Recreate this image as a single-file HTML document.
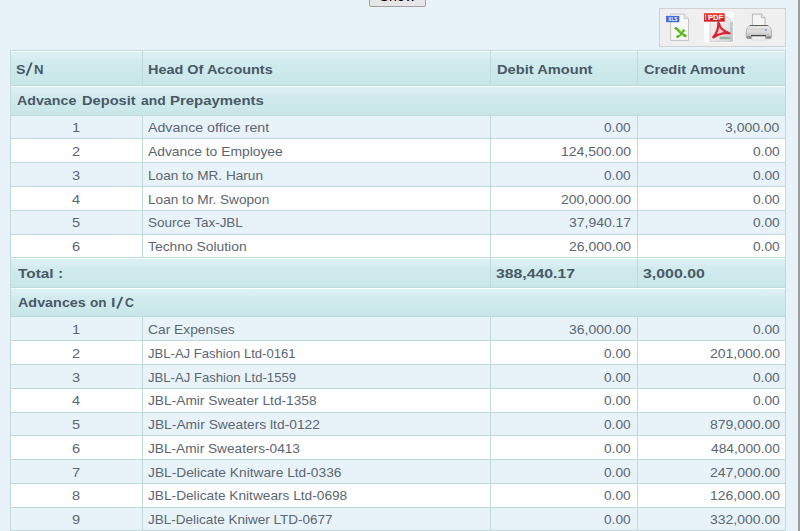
<!DOCTYPE html>
<html><head><meta charset="utf-8"><title>Report</title>
<style>
html,body{margin:0;padding:0}
body{width:800px;height:531px;overflow:hidden;position:relative;background:#e8f3f9;font-family:"Liberation Sans",sans-serif;font-size:13.5px;line-height:20px;color:#5b6672}
#boxes div{position:absolute}
span.n,span.b{position:absolute;white-space:nowrap;transform-origin:0 0;height:20px}
span.b{font-weight:bold;color:#4a5866}
#edge{position:absolute;left:798px;top:0;width:2px;height:531px;background:#9c9f9f}
#btn{position:absolute;left:369px;top:-15px;width:55px;height:20px;border:1px solid #a0a0a0;background:#e6e6e6;border-radius:2px}
#btn i{position:absolute;left:0;right:0;top:0px;text-align:center;font-style:normal;color:#000;font-size:14px;line-height:20px;letter-spacing:0.3px}
#tools{position:absolute;left:659px;top:8px;width:125px;height:37px;border:1px solid #d2d2d2;background:#efefef}
#icons{position:absolute;left:0;top:0}
</style></head><body>
<div id="btn"><i>Show</i></div>
<div id="tools"><svg id="icons" width="125" height="38" viewBox="660 9 125 38">
<defs>
<linearGradient id="pg" x1="0" y1="0" x2="1" y2="1"><stop offset="0" stop-color="#f8ecf1"/><stop offset="0.5" stop-color="#ece6ea"/><stop offset="1" stop-color="#cbd9d5"/></linearGradient>
<linearGradient id="rd" x1="0" y1="0" x2="0" y2="1"><stop offset="0" stop-color="#f2504a"/><stop offset="1" stop-color="#c5141a"/></linearGradient>
<linearGradient id="pb" x1="0" y1="0" x2="0" y2="1"><stop offset="0" stop-color="#f4f4f4"/><stop offset="0.55" stop-color="#d6d6d6"/><stop offset="1" stop-color="#b0b0b0"/></linearGradient>
</defs>
<!-- XLS -->
<path d="M670.6 14.1 H684.2 L688.5 18.4 V40.4 H670.6 Z" fill="#f7f7f7" stroke="#c4c4c4" stroke-width="1"/>
<path d="M684.2 14.1 V18.4 H688.5" fill="#e6e6e6" stroke="#c4c4c4" stroke-width="0.8"/>
<rect x="666.1" y="15.9" width="13.2" height="6.3" fill="#4767dd"/>
<text x="672.8" y="20.9" font-family="Liberation Sans, sans-serif" font-size="4.6" font-weight="bold" fill="#fff" text-anchor="middle">XLS</text>
<path d="M675.6 28.3 C678.8 29.3 679.6 33.6 685.2 35.6" fill="none" stroke="#5cbb22" stroke-width="2.6" stroke-linecap="round"/>
<path d="M683.6 30.4 C682.6 33 680.6 35.4 677.6 36.8" fill="none" stroke="#5cbb22" stroke-width="1.7" stroke-linecap="round"/>
<circle cx="683.6" cy="30.6" r="1.3" fill="#5cbb22"/>
<circle cx="677.6" cy="36.7" r="1.4" fill="#5cbb22"/>
<circle cx="685" cy="35.7" r="1.5" fill="#5cbb22"/>
<!-- PDF -->
<rect x="704" y="12" width="30" height="30.5" fill="#fff"/>
<path d="M710 17 H728 L732.5 21.5 V41.5 H710 Z" fill="url(#pg)" stroke="#c2c2ca" stroke-width="0.7"/>
<path d="M730 22 H732.2 V41 H730 Z" fill="#9fb4b4" opacity="0.5"/>
<path d="M718.4 22.6 C720 27.4 722 30.6 729.4 33.4 C724 32.4 719.4 33.4 713.4 37.4 C716.6 33 718.8 28.4 718.4 22.6 Z" fill="#f3c9cf" stroke="#d9252f" stroke-width="2.3" stroke-linejoin="round"/>
<circle cx="714.4" cy="36.3" r="1.7" fill="#d9252f"/>
<rect x="719.6" y="36.6" width="10.4" height="2.6" fill="#6e927c" opacity="0.6"/>
<rect x="704" y="13" width="20.7" height="8.6" fill="url(#rd)"/>
<text x="715.6" y="20.2" font-family="Liberation Sans, sans-serif" font-size="7.6" font-weight="bold" fill="#fff" text-anchor="middle">PDF</text>
<rect x="705" y="14.5" width="1.1" height="5.5" fill="#f9b8b8"/>
<!-- Printer -->
<path d="M752.4 25.5 V14.1 H761.4 L765 17.7 V25.5 Z" fill="#f4f4f4" stroke="#9e9e9e" stroke-width="0.7"/>
<path d="M761.4 14.1 V17.7 H765" fill="#e6e6e6" stroke="#9e9e9e" stroke-width="0.6"/>
<path d="M750 25.6 H767.6 C770 26.4 771.6 29 771.6 32 V36.8 C771.6 38 770.8 38.6 769.8 38.6 H748 C747 38.6 746.2 38 746.2 36.8 V32 C746.2 29 747.6 26.4 750 25.6 Z" fill="url(#pb)" stroke="#a2a2a2" stroke-width="0.7"/>
<rect x="748.5" y="28.3" width="20.8" height="1.5" fill="#cfcfcf" opacity="0.8"/>
<path d="M746.8 36.2 H751 V38.4 H748 C747.2 38.4 746.8 37.8 746.8 37 Z" fill="#7d7d7d" opacity="0.8"/>
<path d="M771 36.2 H766.2 V38.4 H769.8 C770.6 38.4 771 37.8 771 37 Z" fill="#7d7d7d" opacity="0.8"/>
<path d="M749.8 25.6 H767.8" stroke="#5a5a5a" stroke-width="1"/>
<rect x="751" y="35" width="15" height="1.5" fill="#444"/>
<rect x="752" y="36.5" width="13" height="3.5" fill="#efefef" stroke="#c8c8c8" stroke-width="0.5"/>
<rect x="765" y="29.1" width="1.7" height="1.7" fill="#6d98e2"/>
</svg></div>
<div id="boxes">
<div style="left:10px;top:50px;width:776px;height:481px;background:#bddbd8;"></div>
<div style="left:11px;top:51px;width:131px;height:34px;background:linear-gradient(#fcffff 0,#fcffff 1px,#dbf0f3 1px,#d9eef2 7px,#d1ebee 9px,#c8e6e9 100%);"></div>
<div style="left:143px;top:51px;width:347px;height:34px;background:linear-gradient(#fcffff 0,#fcffff 1px,#dbf0f3 1px,#d9eef2 7px,#d1ebee 9px,#c8e6e9 100%);"></div>
<div style="left:491px;top:51px;width:146px;height:34px;background:linear-gradient(#fcffff 0,#fcffff 1px,#dbf0f3 1px,#d9eef2 7px,#d1ebee 9px,#c8e6e9 100%);"></div>
<div style="left:638px;top:51px;width:147px;height:34px;background:linear-gradient(#fcffff 0,#fcffff 1px,#dbf0f3 1px,#d9eef2 7px,#d1ebee 9px,#c8e6e9 100%);"></div>
<div style="left:11px;top:86px;width:774px;height:29px;background:linear-gradient(#fcffff 0,#fcffff 1px,#dbf0f3 1px,#d9eef2 7px,#d1ebee 9px,#c8e6e9 100%);"></div>
<div style="left:11px;top:116px;width:131px;height:22px;background:#e8f3f9;"></div>
<div style="left:143px;top:116px;width:347px;height:22px;background:#e8f3f9;"></div>
<div style="left:491px;top:116px;width:146px;height:22px;background:#e8f3f9;"></div>
<div style="left:638px;top:116px;width:147px;height:22px;background:#e8f3f9;"></div>
<div style="left:11px;top:139px;width:131px;height:23px;background:#ffffff;"></div>
<div style="left:143px;top:139px;width:347px;height:23px;background:#ffffff;"></div>
<div style="left:491px;top:139px;width:146px;height:23px;background:#ffffff;"></div>
<div style="left:638px;top:139px;width:147px;height:23px;background:#ffffff;"></div>
<div style="left:11px;top:163px;width:131px;height:23px;background:#e8f3f9;"></div>
<div style="left:143px;top:163px;width:347px;height:23px;background:#e8f3f9;"></div>
<div style="left:491px;top:163px;width:146px;height:23px;background:#e8f3f9;"></div>
<div style="left:638px;top:163px;width:147px;height:23px;background:#e8f3f9;"></div>
<div style="left:11px;top:187px;width:131px;height:23px;background:#ffffff;"></div>
<div style="left:143px;top:187px;width:347px;height:23px;background:#ffffff;"></div>
<div style="left:491px;top:187px;width:146px;height:23px;background:#ffffff;"></div>
<div style="left:638px;top:187px;width:147px;height:23px;background:#ffffff;"></div>
<div style="left:11px;top:211px;width:131px;height:23px;background:#e8f3f9;"></div>
<div style="left:143px;top:211px;width:347px;height:23px;background:#e8f3f9;"></div>
<div style="left:491px;top:211px;width:146px;height:23px;background:#e8f3f9;"></div>
<div style="left:638px;top:211px;width:147px;height:23px;background:#e8f3f9;"></div>
<div style="left:11px;top:235px;width:131px;height:22px;background:#ffffff;"></div>
<div style="left:143px;top:235px;width:347px;height:22px;background:#ffffff;"></div>
<div style="left:491px;top:235px;width:146px;height:22px;background:#ffffff;"></div>
<div style="left:638px;top:235px;width:147px;height:22px;background:#ffffff;"></div>
<div style="left:11px;top:258px;width:479px;height:29px;background:linear-gradient(#fcffff 0,#fcffff 1px,#dbf0f3 1px,#d9eef2 7px,#d1ebee 9px,#c8e6e9 100%);"></div>
<div style="left:491px;top:258px;width:146px;height:29px;background:linear-gradient(#fcffff 0,#fcffff 1px,#dbf0f3 1px,#d9eef2 7px,#d1ebee 9px,#c8e6e9 100%);"></div>
<div style="left:638px;top:258px;width:147px;height:29px;background:linear-gradient(#fcffff 0,#fcffff 1px,#dbf0f3 1px,#d9eef2 7px,#d1ebee 9px,#c8e6e9 100%);"></div>
<div style="left:11px;top:288px;width:774px;height:28px;background:linear-gradient(#fcffff 0,#fcffff 1px,#dbf0f3 1px,#d9eef2 7px,#d1ebee 9px,#c8e6e9 100%);"></div>
<div style="left:11px;top:317px;width:131px;height:23px;background:#e8f3f9;"></div>
<div style="left:143px;top:317px;width:347px;height:23px;background:#e8f3f9;"></div>
<div style="left:491px;top:317px;width:146px;height:23px;background:#e8f3f9;"></div>
<div style="left:638px;top:317px;width:147px;height:23px;background:#e8f3f9;"></div>
<div style="left:11px;top:341px;width:131px;height:23px;background:#ffffff;"></div>
<div style="left:143px;top:341px;width:347px;height:23px;background:#ffffff;"></div>
<div style="left:491px;top:341px;width:146px;height:23px;background:#ffffff;"></div>
<div style="left:638px;top:341px;width:147px;height:23px;background:#ffffff;"></div>
<div style="left:11px;top:365px;width:131px;height:23px;background:#e8f3f9;"></div>
<div style="left:143px;top:365px;width:347px;height:23px;background:#e8f3f9;"></div>
<div style="left:491px;top:365px;width:146px;height:23px;background:#e8f3f9;"></div>
<div style="left:638px;top:365px;width:147px;height:23px;background:#e8f3f9;"></div>
<div style="left:11px;top:389px;width:131px;height:23px;background:#ffffff;"></div>
<div style="left:143px;top:389px;width:347px;height:23px;background:#ffffff;"></div>
<div style="left:491px;top:389px;width:146px;height:23px;background:#ffffff;"></div>
<div style="left:638px;top:389px;width:147px;height:23px;background:#ffffff;"></div>
<div style="left:11px;top:413px;width:131px;height:22px;background:#e8f3f9;"></div>
<div style="left:143px;top:413px;width:347px;height:22px;background:#e8f3f9;"></div>
<div style="left:491px;top:413px;width:146px;height:22px;background:#e8f3f9;"></div>
<div style="left:638px;top:413px;width:147px;height:22px;background:#e8f3f9;"></div>
<div style="left:11px;top:436px;width:131px;height:23px;background:#ffffff;"></div>
<div style="left:143px;top:436px;width:347px;height:23px;background:#ffffff;"></div>
<div style="left:491px;top:436px;width:146px;height:23px;background:#ffffff;"></div>
<div style="left:638px;top:436px;width:147px;height:23px;background:#ffffff;"></div>
<div style="left:11px;top:460px;width:131px;height:23px;background:#e8f3f9;"></div>
<div style="left:143px;top:460px;width:347px;height:23px;background:#e8f3f9;"></div>
<div style="left:491px;top:460px;width:146px;height:23px;background:#e8f3f9;"></div>
<div style="left:638px;top:460px;width:147px;height:23px;background:#e8f3f9;"></div>
<div style="left:11px;top:484px;width:131px;height:23px;background:#ffffff;"></div>
<div style="left:143px;top:484px;width:347px;height:23px;background:#ffffff;"></div>
<div style="left:491px;top:484px;width:146px;height:23px;background:#ffffff;"></div>
<div style="left:638px;top:484px;width:147px;height:23px;background:#ffffff;"></div>
<div style="left:11px;top:508px;width:131px;height:22px;background:#e8f3f9;"></div>
<div style="left:143px;top:508px;width:347px;height:22px;background:#e8f3f9;"></div>
<div style="left:491px;top:508px;width:146px;height:22px;background:#e8f3f9;"></div>
<div style="left:638px;top:508px;width:147px;height:22px;background:#e8f3f9;"></div>
</div>
<div id="text">
<span class="b" style="left:15.75px;top:60.00px;transform:scaleX(1.0500)">S</span>
<span class="b" style="left:34.32px;top:60.00px;transform:scaleX(0.9750)">N</span>
<span class="b" style="left:148.03px;top:60.00px;transform:scaleX(1.0704)">Head Of Accounts</span>
<span class="b" style="left:496.81px;top:60.00px;transform:scaleX(1.0851)">Debit Amount</span>
<span class="b" style="left:643.80px;top:60.00px;transform:scaleX(1.0817)">Credit Amount</span>
<span class="b" style="left:17.00px;top:91.00px;transform:scaleX(1.0536)">Advance</span>
<span class="b" style="left:82.12px;top:91.00px;transform:scaleX(1.0833)">Deposit</span>
<span class="b" style="left:140.50px;top:91.00px;transform:scaleX(1.0304)">and</span>
<span class="b" style="left:170.09px;top:91.00px;transform:scaleX(1.1060)">Prepayments</span>
<span class="n" style="left:71.88px;top:118.00px;transform:scaleX(1.0800)">1</span>
<span class="n" style="left:148.20px;top:118.00px;transform:scaleX(1.0504)">Advance office rent</span>
<span class="n" style="left:604.30px;top:118.00px;transform:scaleX(1.0154)">0.00</span>
<span class="n" style="left:725.17px;top:118.00px;transform:scaleX(1.0333)">3,000.00</span>
<span class="n" style="left:71.88px;top:142.00px;transform:scaleX(1.0800)">2</span>
<span class="n" style="left:148.20px;top:142.00px;transform:scaleX(1.0260)">Advance to Employee</span>
<span class="n" style="left:561.37px;top:142.00px;transform:scaleX(1.0348)">124,500.00</span>
<span class="n" style="left:752.50px;top:142.00px;transform:scaleX(1.0154)">0.00</span>
<span class="n" style="left:71.88px;top:166.00px;transform:scaleX(1.0800)">3</span>
<span class="n" style="left:148.20px;top:166.00px;transform:scaleX(1.0080)">Loan to MR. Harun</span>
<span class="n" style="left:604.30px;top:166.00px;transform:scaleX(1.0154)">0.00</span>
<span class="n" style="left:752.50px;top:166.00px;transform:scaleX(1.0154)">0.00</span>
<span class="n" style="left:72.42px;top:190.00px;transform:scaleX(1.0800)">4</span>
<span class="n" style="left:148.20px;top:190.00px;transform:scaleX(1.0101)">Loan to Mr. Swopon</span>
<span class="n" style="left:561.37px;top:190.00px;transform:scaleX(1.0348)">200,000.00</span>
<span class="n" style="left:752.50px;top:190.00px;transform:scaleX(1.0154)">0.00</span>
<span class="n" style="left:71.88px;top:213.00px;transform:scaleX(1.0800)">5</span>
<span class="n" style="left:148.20px;top:213.00px;transform:scaleX(0.9979)">Source Tax-JBL</span>
<span class="n" style="left:568.67px;top:213.00px;transform:scaleX(1.0339)">37,940.17</span>
<span class="n" style="left:752.50px;top:213.00px;transform:scaleX(1.0154)">0.00</span>
<span class="n" style="left:71.88px;top:237.00px;transform:scaleX(1.0800)">6</span>
<span class="n" style="left:148.20px;top:237.00px;transform:scaleX(1.0263)">Techno Solution</span>
<span class="n" style="left:568.67px;top:237.00px;transform:scaleX(1.0339)">26,000.00</span>
<span class="n" style="left:752.50px;top:237.00px;transform:scaleX(1.0154)">0.00</span>
<span class="b" style="left:17.50px;top:264.00px;transform:scaleX(1.1395)">Total :</span>
<span class="b" style="left:495.63px;top:264.00px;transform:scaleX(1.1697)">388,440.17</span>
<span class="b" style="left:642.82px;top:264.00px;transform:scaleX(1.1765)">3,000.00</span>
<span class="b" style="left:17.50px;top:293.00px;transform:scaleX(1.0635)">Advances</span>
<span class="b" style="left:90.10px;top:293.00px;transform:scaleX(1.0000)">on</span>
<span class="b" style="left:110.90px;top:293.00px;transform:scaleX(1.2000)">l</span>
<span class="b" style="left:124.90px;top:293.00px;transform:scaleX(0.9111)">C</span>
<span class="n" style="left:71.88px;top:320.00px;transform:scaleX(1.0800)">1</span>
<span class="n" style="left:148.20px;top:320.00px;transform:scaleX(1.0226)">Car Expenses</span>
<span class="n" style="left:568.67px;top:320.00px;transform:scaleX(1.0339)">36,000.00</span>
<span class="n" style="left:752.50px;top:320.00px;transform:scaleX(1.0154)">0.00</span>
<span class="n" style="left:71.88px;top:344.00px;transform:scaleX(1.0800)">2</span>
<span class="n" style="left:148.20px;top:344.00px;transform:scaleX(0.9684)">JBL-AJ Fashion Ltd-0161</span>
<span class="n" style="left:604.30px;top:344.00px;transform:scaleX(1.0154)">0.00</span>
<span class="n" style="left:709.57px;top:344.00px;transform:scaleX(1.0348)">201,000.00</span>
<span class="n" style="left:71.88px;top:368.00px;transform:scaleX(1.0800)">3</span>
<span class="n" style="left:148.20px;top:368.00px;transform:scaleX(0.9717)">JBL-AJ Fashion Ltd-1559</span>
<span class="n" style="left:604.30px;top:368.00px;transform:scaleX(1.0154)">0.00</span>
<span class="n" style="left:752.50px;top:368.00px;transform:scaleX(1.0154)">0.00</span>
<span class="n" style="left:72.42px;top:391.00px;transform:scaleX(1.0800)">4</span>
<span class="n" style="left:148.20px;top:391.00px;transform:scaleX(1.0170)">JBL-Amir Sweater Ltd-1358</span>
<span class="n" style="left:604.30px;top:391.00px;transform:scaleX(1.0154)">0.00</span>
<span class="n" style="left:752.50px;top:391.00px;transform:scaleX(1.0154)">0.00</span>
<span class="n" style="left:71.88px;top:415.00px;transform:scaleX(1.0800)">5</span>
<span class="n" style="left:148.20px;top:415.00px;transform:scaleX(1.0232)">JBL-Amir Sweaters ltd-0122</span>
<span class="n" style="left:604.30px;top:415.00px;transform:scaleX(1.0154)">0.00</span>
<span class="n" style="left:709.57px;top:415.00px;transform:scaleX(1.0348)">879,000.00</span>
<span class="n" style="left:71.88px;top:439.00px;transform:scaleX(1.0800)">6</span>
<span class="n" style="left:148.20px;top:439.00px;transform:scaleX(1.0127)">JBL-Amir Sweaters-0413</span>
<span class="n" style="left:604.30px;top:439.00px;transform:scaleX(1.0154)">0.00</span>
<span class="n" style="left:710.60px;top:439.00px;transform:scaleX(1.0194)">484,000.00</span>
<span class="n" style="left:71.88px;top:463.00px;transform:scaleX(1.0800)">7</span>
<span class="n" style="left:148.20px;top:463.00px;transform:scaleX(1.0190)">JBL-Delicate Knitware Ltd-0336</span>
<span class="n" style="left:604.30px;top:463.00px;transform:scaleX(1.0154)">0.00</span>
<span class="n" style="left:709.57px;top:463.00px;transform:scaleX(1.0348)">247,000.00</span>
<span class="n" style="left:71.88px;top:486.00px;transform:scaleX(1.0800)">8</span>
<span class="n" style="left:148.20px;top:486.00px;transform:scaleX(1.0133)">JBL-Delicate Knitwears Ltd-0698</span>
<span class="n" style="left:604.30px;top:486.00px;transform:scaleX(1.0154)">0.00</span>
<span class="n" style="left:709.57px;top:486.00px;transform:scaleX(1.0348)">126,000.00</span>
<span class="n" style="left:71.88px;top:510.00px;transform:scaleX(1.0800)">9</span>
<span class="n" style="left:148.20px;top:510.00px;transform:scaleX(1.0016)">JBL-Delicate Kniwer LTD-0677</span>
<span class="n" style="left:604.30px;top:510.00px;transform:scaleX(1.0154)">0.00</span>
<span class="n" style="left:709.57px;top:510.00px;transform:scaleX(1.0348)">332,000.00</span>
</div>
<svg style="position:absolute;left:24px;top:61px" width="10" height="16"><line x1="2.5" y1="14.6" x2="7.8" y2="1.5" stroke="#4a5866" stroke-width="1.9"/></svg>
<svg style="position:absolute;left:115px;top:295px" width="10" height="16"><line x1="2.1" y1="13.7" x2="7.3" y2="1.8" stroke="#4a5866" stroke-width="1.9"/></svg>
<div id="edge"></div>
</body></html>
